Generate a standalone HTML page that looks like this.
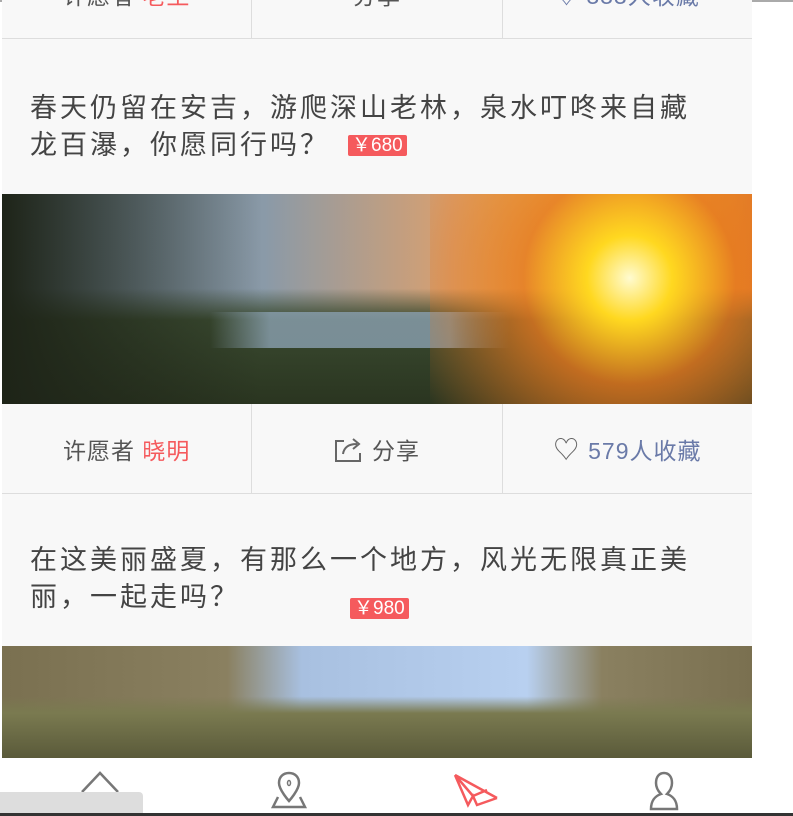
<!DOCTYPE html>
<html><head><meta charset="utf-8"><style>
*{margin:0;padding:0;box-sizing:border-box}
body{width:793px;height:816px;background:#fff;overflow:hidden;position:relative;font-family:"Liberation Sans","Noto Sans CJK SC",sans-serif}
.a{position:absolute}
.bg{left:2px;width:750px;background:#f8f8f8}
.row{left:2px;width:750px;height:90px;border-bottom:1px solid #ddd;background:#f8f8f8;display:flex}
.row div{flex:1;display:flex;align-items:center;justify-content:center;font-size:23px;letter-spacing:1px;color:#555;border-right:1px solid #ddd}
.row div:last-child{border-right:none}
.t{left:30px;width:680px;font-size:27px;line-height:37px;color:#444;letter-spacing:3px}
.p{display:inline-block;background:#f55a5d;color:#fff;font-size:19px;line-height:21px;padding:0 4px;border-radius:2px;vertical-align:3px;margin-left:18px;letter-spacing:0}
</style></head><body>
<div class="a" style="left:0;top:0;width:793px;height:2px;background:#aaa"></div>
<div class="a bg" style="top:0;height:646px"></div>
<div class="row a" style="top:-51px">
<div>许愿者&nbsp;<span style="color:#f55a5d">老王</span></div>
<div>分享</div>
<div style="color:#6a7aa8">♡ 333人收藏</div></div>
<div class="a t" style="top:90px">春天仍留在安吉，游爬深山老林，泉水叮咚来自藏龙百瀑，你愿同行吗？<span class="p">￥680</span></div>
<div class="a" style="left:2px;top:194px;width:750px;height:210px;background:linear-gradient(180deg,rgba(0,0,0,0) 0,rgba(0,0,0,0) 45%,#3a4a30 60%,#2a3520 100%),linear-gradient(90deg,#6a7e8c 0,#8a9aa8 35%,#d8a070 60%,#ffd040 85%,#e08030 100%)"></div>
<div class="a" style="left:2px;top:194px;width:260px;height:210px;background:linear-gradient(90deg,#1e2418,rgba(40,50,30,0))"></div>
<div class="a" style="left:210px;top:312px;width:300px;height:36px;background:linear-gradient(90deg,rgba(138,160,176,0),rgba(138,160,176,.8) 20%,rgba(138,160,176,.8) 80%,rgba(138,160,176,0))"></div>
<div class="a" style="left:430px;top:194px;width:322px;height:210px;background:radial-gradient(circle at 62% 40%,#fffbd0 0,#ffd820 18%,rgba(230,120,30,.8) 45%,rgba(120,60,20,0) 100%)"></div>
<div class="row a" style="top:404px">
<div>许愿者&nbsp;<span style="color:#f55a5d">晓明</span></div>
<div><svg width="30" height="26" viewBox="0 0 30 26" style="margin-right:8px"><path d="M10 5H2v20h24v-8" fill="none" stroke="#666" stroke-width="2"/><path d="M9 18c1-7 6-10 14-10M19 3l6 5-6 5" fill="none" stroke="#666" stroke-width="2"/></svg>分享</div>
<div style="color:#6a7aa8"><span style="color:#666;font-size:26px;margin-right:8px">♡</span>579人收藏</div></div>
<div class="a t" style="top:542px">在这美丽盛夏，有那么一个地方，风光无限真正美丽，一起走吗？<span class="p" style="margin-left:110px;vertical-align:-8px">￥980</span></div>
<div class="a" style="left:2px;top:646px;width:750px;height:112px;background:linear-gradient(180deg,rgba(0,0,0,0) 0,rgba(0,0,0,0) 45%,#7a7a50 60%,#5a5a3a 100%),linear-gradient(90deg,#7a7050 0,#8a8060 30%,#a8c0e0 40%,#b8d0f0 70%,#8a8060 80%,#7a7050 100%)"></div>
<div class="a" style="left:0;top:758px;width:793px;height:58px;background:#fff"></div>
<svg class="a" style="left:80px;top:770px" width="40" height="30" viewBox="0 0 40 30"><path d="M2 22L20 3l18 19M6 22v8M34 22v8" fill="none" stroke="#777" stroke-width="2.5"/></svg>
<svg class="a" style="left:270px;top:771px" width="38" height="38" viewBox="0 0 38 38"><path d="M19 2c-6 0-10 4-10 10 0 7 10 18 10 18s10-11 10-18c0-6-4-10-10-10z" fill="none" stroke="#777" stroke-width="2.5"/><ellipse cx="19" cy="12" rx="1.5" ry="2.5" fill="none" stroke="#777" stroke-width="1.5"/><path d="M8 26l-5 10h32l-5-10" fill="none" stroke="#777" stroke-width="2.5"/></svg>
<svg class="a" style="left:453px;top:773px" width="48" height="38" viewBox="0 0 48 38"><path d="M2 2l42 23M2 2l13 30 5-9 4 9 20-7M2 2l18 21M24 32l-4-9 14-6" fill="none" stroke="#f55a5d" stroke-width="2.5"/></svg>
<svg class="a" style="left:644px;top:771px" width="40" height="40" viewBox="0 0 40 40"><path d="M20 2c-5 0-8 4-8 10 0 5 3 9 5 11-6 2-10 7-10 15h26c0-8-4-13-10-15 2-2 5-6 5-11 0-6-3-10-8-10z" fill="none" stroke="#777" stroke-width="2.5"/></svg>
<div class="a" style="left:0;top:792px;width:143px;height:22px;background:#ddd;border-radius:0 4px 0 0"></div>
<div class="a" style="left:0;top:813px;width:793px;height:3px;background:#333"></div>
</body></html>
